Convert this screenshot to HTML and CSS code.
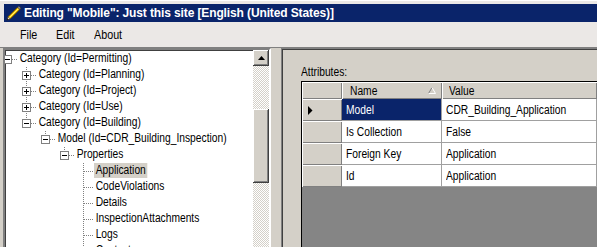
FILE: index.html
```html
<!DOCTYPE html>
<html lang="en">
<head>
    <meta charset="UTF-8">
    <title>Editing "Mobile"</title>
    <link rel="stylesheet" href="styles.css">
</head>
<body>
    <div class="window">
        <div class="titlebar">
            <svg class="app-icon" width="16" height="16" viewBox="0 0 16 16">
                <path d="M1 15 L2.2 11.6 L4.4 13.8 Z" fill="#f1e2c2" stroke="#4a3a20" stroke-width="0.7" stroke-linejoin="round"/>
                <path d="M0.8 15.2 L1.4 13.4 L2.6 14.6 Z" fill="#101010"/>
                <path d="M2.2 11.6 L11.6 2.2 L13.8 4.4 L4.4 13.8 Z" fill="#f6c400" stroke="#5c4300" stroke-width="0.8" stroke-linejoin="round"/>
                <path d="M3.3 12.7 L12.7 3.3" stroke="#ffef80" stroke-width="1"/>
                <path d="M11.6 2.2 L12.8 1 L15 3.2 L13.8 4.4 Z" fill="#9a9a9a" stroke="#303030" stroke-width="0.8" stroke-linejoin="round"/>
            </svg>
            <span class="title">Editing "Mobile": Just this site [English (United States)]</span>
        </div>
        <div class="menubar">
            <span class="menu-item">File</span>
            <span class="menu-item">Edit</span>
            <span class="menu-item">About</span>
        </div>
        <div class="main">
            <div class="tree-box">
                <div class="tree">
                    <div class="node"><span class="g end"><i class="btn minus"></i></span><span class="label">Category (Id=Permitting)</span></div>
                    <div class="node"><span class="g"></span><span class="g tee"><i class="btn plus"></i></span><span class="label">Category (Id=Planning)</span></div>
                    <div class="node"><span class="g"></span><span class="g tee"><i class="btn plus"></i></span><span class="label">Category (Id=Project)</span></div>
                    <div class="node"><span class="g"></span><span class="g tee"><i class="btn plus"></i></span><span class="label">Category (Id=Use)</span></div>
                    <div class="node"><span class="g"></span><span class="g ell"><i class="btn minus"></i></span><span class="label">Category (Id=Building)</span></div>
                    <div class="node"><span class="g"></span><span class="g"></span><span class="g ell"><i class="btn minus"></i></span><span class="label">Model (Id=CDR_Building_Inspection)</span></div>
                    <div class="node"><span class="g"></span><span class="g"></span><span class="g"></span><span class="g ell"><i class="btn minus"></i></span><span class="label">Properties</span></div>
                    <div class="node"><span class="g"></span><span class="g"></span><span class="g"></span><span class="g"></span><span class="g tee"></span><span class="label sel">Application</span></div>
                    <div class="node"><span class="g"></span><span class="g"></span><span class="g"></span><span class="g"></span><span class="g tee"></span><span class="label">CodeViolations</span></div>
                    <div class="node"><span class="g"></span><span class="g"></span><span class="g"></span><span class="g"></span><span class="g tee"></span><span class="label">Details</span></div>
                    <div class="node"><span class="g"></span><span class="g"></span><span class="g"></span><span class="g"></span><span class="g tee"></span><span class="label">InspectionAttachments</span></div>
                    <div class="node"><span class="g"></span><span class="g"></span><span class="g"></span><span class="g"></span><span class="g tee"></span><span class="label">Logs</span></div>
                    <div class="node"><span class="g"></span><span class="g"></span><span class="g"></span><span class="g"></span><span class="g tee"></span><span class="label">Contacts</span></div>
                </div>
                <div class="vscroll">
                    <div class="sb-btn">
                        <svg width="7" height="4" viewBox="0 0 7 4"><path d="M3.5 0 L7 4 L0 4 Z" fill="#000"/></svg>
                    </div>
                    <div class="sb-track upper"></div>
                    <div class="sb-thumb"></div>
                    <div class="sb-track"></div>
                </div>
            </div>
            <div class="splitter"></div>
            <div class="pane">
                <div class="pane-label"><span class="nx">Attributes:</span></div>
                <div class="grid">
                    <div class="grid-row head">
                        <div class="rh"></div>
                        <div class="hc name"><span class="nx">Name</span>
                            <svg class="sort" width="8" height="7" viewBox="0 0 8 7">
                                <path d="M0.5 6.5 L4 0.5" stroke="#808080" fill="none"/>
                                <path d="M4 0.5 L7.5 6.5 L0.5 6.5" stroke="#fff" fill="none"/>
                            </svg>
                        </div>
                        <div class="hc value"><span class="nx">Value</span></div>
                    </div>
                    <div class="grid-row">
                        <div class="rh">
                            <svg width="5" height="9" viewBox="0 0 5 9"><path d="M0 0 L4.5 4.5 L0 9 Z" fill="#000"/></svg>
                        </div>
                        <div class="cell name selected"><span class="nx">Model</span></div>
                        <div class="cell value"><span class="nx">CDR_Building_Application</span></div>
                    </div>
                    <div class="grid-row">
                        <div class="rh"></div>
                        <div class="cell name"><span class="nx">Is Collection</span></div>
                        <div class="cell value"><span class="nx">False</span></div>
                    </div>
                    <div class="grid-row">
                        <div class="rh"></div>
                        <div class="cell name"><span class="nx">Foreign Key</span></div>
                        <div class="cell value"><span class="nx">Application</span></div>
                    </div>
                    <div class="grid-row">
                        <div class="rh"></div>
                        <div class="cell name"><span class="nx">Id</span></div>
                        <div class="cell value"><span class="nx">Application</span></div>
                    </div>
                    <div class="grid-empty"></div>
                </div>
            </div>
        </div>
    </div>
</body>
</html>
```

FILE: styles.css
```css
html, body {
    margin: 0;
    height: 100%;
    overflow: hidden;
}
body {
    background-color: #ebe8e6;
    font-family: "Liberation Sans", Arial, sans-serif;
    font-size: 12.5px;
    color: #000000;
}
/* narrow text: the dialog font is a lot narrower than Arial */
.nx, .label, .menu-item {
    display: inline-block;
    white-space: nowrap;
    transform: scaleX(0.82);
    transform-origin: 0 50%;
}
.window {
    height: 100%;
    display: flex;
    flex-direction: column;
    border-top: 1px solid #ffffff;
}
.titlebar {
    margin: 3px 0 0 4px;
    height: 18px;
    background-color: #0a246a;
    display: flex;
    align-items: center;
    flex: none;
}
.app-icon {
    margin: 0 2px 0 2px;
    flex: none;
}
.title {
    color: #ffffff;
    font-weight: bold;
    font-size: 12px;
    letter-spacing: -0.12px;
    white-space: nowrap;
}
.menubar {
    height: 25px;
    flex: none;
    display: flex;
    align-items: center;
    gap: 16px;
    padding-left: 20px;
}
.menu-item {
    transform: scaleX(0.86);
}
.main {
    flex: 1;
    display: flex;
    min-height: 0;
    border-top: 1px solid #808080;
    background-color: #d4d0c8;
}
.tree-box {
    margin-left: 3px;
    display: flex;
    border-style: solid;
    border-width: 2px 2px 0 2px;
    border-color: #808080 #ffffff #ffffff #808080;
    box-shadow: inset 1px 1px #404040;
    background-color: #ffffff;
}
.tree {
    width: 248px;
    overflow: hidden;
    padding-top: 1px;
    --dot-v: repeating-linear-gradient(to bottom, #808080 0 1px, transparent 1px 2px);
    --dot-h: repeating-linear-gradient(to right, #808080 0 1px, transparent 1px 2px);
}
.node {
    display: flex;
    height: 16px;
    margin-left: -7px;
    white-space: nowrap;
}
.g {
    width: 19px;
    height: 16px;
    flex: none;
    display: flex;
    justify-content: center;
    align-items: flex-start;
    background-repeat: no-repeat;
}
.g.end {
    background-image: var(--dot-h);
    background-position: 10px 8px;
    background-size: 9px 1px;
}
.g.tee {
    background-image: var(--dot-v), var(--dot-h);
    background-position: 9px 0, 10px 8px;
    background-size: 1px 16px, 9px 1px;
}
.g.ell {
    background-image: var(--dot-v), var(--dot-h);
    background-position: 9px 0, 10px 8px;
    background-size: 1px 8px, 9px 1px;
}
.btn {
    width: 9px;
    height: 9px;
    margin-top: 4px;
    box-sizing: border-box;
    border: 1px solid #808080;
    background-color: #ffffff;
    background-repeat: no-repeat;
}
.btn.minus {
    background-image: linear-gradient(#000, #000);
    background-position: 1px 3px;
    background-size: 5px 1px;
}
.btn.plus {
    background-image: linear-gradient(#000, #000), linear-gradient(#000, #000);
    background-position: 1px 3px, 3px 1px;
    background-size: 5px 1px, 1px 5px;
}
.label {
    margin-left: 1px;
    padding: 0 2px;
    height: 15px;
    line-height: 15px;
}
.label.sel {
    background-color: #d4d0c8;
}
.vscroll {
    width: 16px;
    flex: none;
    display: flex;
    flex-direction: column;
}
.sb-btn {
    height: 16px;
    flex: none;
    display: flex;
    align-items: center;
    justify-content: center;
    background-color: #d4d0c8;
    box-shadow: inset -1px -1px #404040, inset 1px 1px #ffffff, inset -2px -2px #808080;
}
.sb-track {
    flex: 1;
    background: repeating-conic-gradient(#ffffff 0 25%, #d4d0c8 0 50%) 0 0 / 2px 2px;
}
.sb-track.upper {
    flex: none;
    height: 43px;
}
.sb-thumb {
    height: 74px;
    flex: none;
    background-color: #d4d0c8;
    box-shadow: inset -1px -1px #404040, inset 1px 1px #ffffff, inset -2px -2px #808080;
}
.splitter {
    width: 10px;
    flex: none;
    background-color: #d4d0c8;
}
.pane {
    flex: 1;
    min-width: 0;
    background-color: #d4d0c8;
    border-style: solid;
    border-width: 1px 0 0 1px;
    border-color: #808080;
    box-shadow: inset 1px 1px #404040;
    padding: 16px 0 0 19px;
    display: flex;
    flex-direction: column;
}
.pane-label {
    height: 15px;
    line-height: 15px;
    margin-bottom: 1px;
}
.grid {
    flex: 1;
    display: flex;
    flex-direction: column;
    border-style: solid;
    border-width: 1px 0 0 1px;
    border-color: #000000;
    overflow: hidden;
}
.grid-row {
    display: flex;
    height: 22px;
    flex: none;
}
.grid-row.head {
    height: 17px;
}
.rh {
    width: 40px;
    flex: none;
    display: flex;
    align-items: center;
    padding-left: 6px;
    box-sizing: border-box;
    background-color: #d4d0c8;
    box-shadow: inset 0 1px #ffffff, inset 1px 0 #ffffff, inset -1px -1px #808080;
}
.hc {
    display: flex;
    align-items: center;
    padding-left: 8px;
    box-sizing: border-box;
    background-color: #d4d0c8;
    white-space: nowrap;
    box-shadow: inset 1px 1px #ffffff, inset -1px -1px #808080;
}
.hc.name {
    width: 100px;
    flex: none;
}
.sort {
    margin-left: auto;
    margin-right: 6px;
}
.hc.value {
    flex: 1;
    padding-left: 7px;
}
.cell {
    display: flex;
    align-items: center;
    padding-left: 4px;
    box-sizing: border-box;
    background-color: #ffffff;
    border-right: 1px solid #a0a0a0;
    border-bottom: 1px solid #a0a0a0;
    white-space: nowrap;
}
.cell.name {
    width: 100px;
    flex: none;
}
.cell.value {
    flex: 1;
}
.cell.selected {
    background-color: #0a246a;
    color: #ffffff;
}
.grid-empty {
    flex: 1;
    background-color: #858585;
}
```
